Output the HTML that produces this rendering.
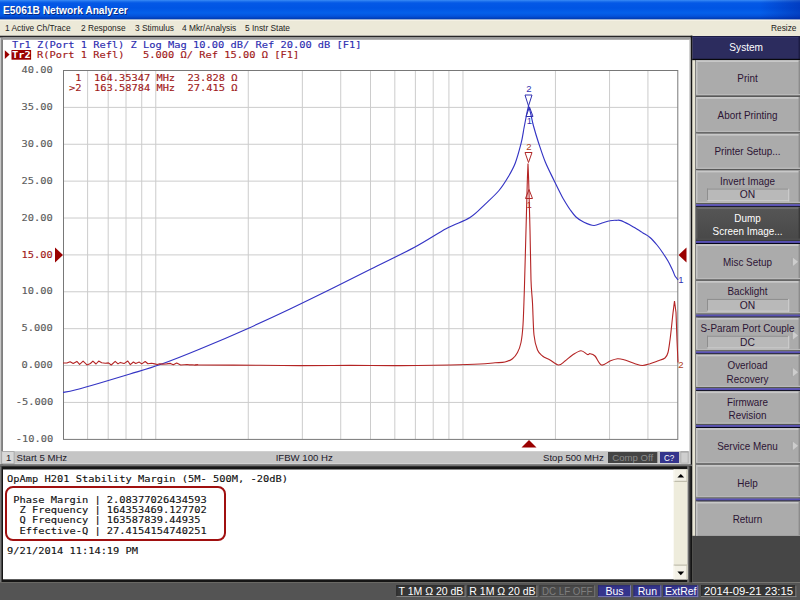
<!DOCTYPE html>
<html lang="en">
<head>
<meta charset="utf-8">
<title>E5061B Network Analyzer</title>
<style>
html,body{margin:0;padding:0;}
body{width:800px;height:600px;overflow:hidden;position:relative;background:#ece9d8;font-family:"Liberation Sans",sans-serif;}
div{position:absolute;box-sizing:border-box;white-space:nowrap;}
#plotsvg{position:absolute;left:0;top:0;}
.mono{font-family:"DejaVu Sans Mono","Liberation Mono",monospace;font-size:9.2px;white-space:pre;line-height:12px;transform:scaleX(1.1285);transform-origin:0 0;-webkit-text-stroke:0.13px currentColor;margin-top:0.6px;}
.ylab{color:#5c5c5c;right:747px;text-align:right;transform-origin:100% 0;}
#title{left:3px;top:3.6px;color:#fff;font-weight:bold;font-size:10.2px;line-height:14px;text-shadow:1px 1px 0 #0a2a80;}
.menu{top:20.5px;font-size:9.4px;line-height:14.5px;color:#222;transform-origin:0 0;transform:scaleX(0.89);}
.cb{top:451.2px;font-size:9.6px;line-height:13.6px;color:#201828;}
.cbx{top:452px;height:11px;font-size:9.6px;line-height:11.4px;text-align:center;}
#syshead{left:692.4px;top:37px;width:107.6px;color:#fff;text-align:center;font-size:10.1px;line-height:22.5px;}
.btn{left:696.8px;width:101px;height:36.8px;color:#2c1434;font-size:10.3px;text-align:center;}
.btn .lbl{left:0;width:100%;top:1.7px;height:100%;line-height:34.5px;transform:scaleX(0.96);}
.btn.two .lbl{line-height:13.8px;top:4.3px;}
.btn.val .lbl{line-height:14px;top:4.3px;height:14px;}
.btn.sel{color:#fff;}
.vbox{left:9.5px;top:18.8px;width:82.2px;height:12.7px;line-height:12.7px;font-size:10.3px;text-align:center;}
.sbx{top:586.2px;height:11px;font-size:10.5px;line-height:11px;text-align:center;color:#fff;}
.sbx span{display:inline-block;transform-origin:50% 50%;}
</style>
</head>
<body>
<svg id="plotsvg" width="800" height="600" viewBox="0 0 800 600">
<defs><linearGradient id="tg" x1="0" y1="0" x2="0" y2="1"><stop offset="0" stop-color="#3a8cf6"/><stop offset="0.076" stop-color="#1a6eec"/><stop offset="0.153" stop-color="#0458e6"/><stop offset="0.41" stop-color="#0055e4"/><stop offset="0.66" stop-color="#0560ea"/><stop offset="0.82" stop-color="#0453dc"/><stop offset="0.92" stop-color="#0142c0"/><stop offset="1" stop-color="#0138a8"/></linearGradient><linearGradient id="tr" x1="0" y1="0" x2="1" y2="0"><stop offset="0" stop-color="#001e96" stop-opacity="0"/><stop offset="1" stop-color="#001e96" stop-opacity="0.45"/></linearGradient><linearGradient id="rb" x1="0" y1="0" x2="1" y2="0"><stop offset="0" stop-color="#9a9a9a"/><stop offset="0.45" stop-color="#3a3a3a"/><stop offset="0.75" stop-color="#141414"/><stop offset="1" stop-color="#141414"/></linearGradient><linearGradient id="selg" x1="0" y1="0" x2="0" y2="1"><stop offset="0" stop-color="#565656"/><stop offset="1" stop-color="#464646"/></linearGradient></defs>
<rect x="0" y="0" width="800.00" height="600.00" fill="#ece9d8"/>
<rect x="0" y="0" width="800.00" height="19.60" fill="url(#tg)"/>
<rect x="760" y="0" width="40.00" height="19.60" fill="url(#tr)"/>
<rect x="0" y="19.6" width="800.00" height="1.00" fill="#faf7ea"/>
<rect x="0" y="35.7" width="692.40" height="429.30" fill="#ffffff"/>
<rect x="0" y="37.5" width="1.30" height="427.50" fill="#c8c8c8"/>
<rect x="1.3" y="37.5" width="1.50" height="427.50" fill="#606060"/>
<rect x="0" y="35.7" width="692.40" height="1.80" fill="#262626"/>
<rect x="1.3" y="37.5" width="689.40" height="2.30" fill="#9c9c9c"/>
<rect x="689" y="39.8" width="1.70" height="425.20" fill="#d2d2d2"/>
<rect x="690.7" y="35.7" width="1.70" height="429.30" fill="#141414"/>
<g stroke="#cccccc" stroke-width="1" fill="none">
<line x1="87.62" y1="70.5" x2="87.62" y2="439.3"/>
<line x1="108.19" y1="70.5" x2="108.19" y2="439.3"/>
<line x1="126.01" y1="70.5" x2="126.01" y2="439.3"/>
<line x1="141.72" y1="70.5" x2="141.72" y2="439.3"/>
<line x1="155.78" y1="70.5" x2="155.78" y2="439.3"/>
<line x1="248.25" y1="70.5" x2="248.25" y2="439.3"/>
<line x1="302.35" y1="70.5" x2="302.35" y2="439.3"/>
<line x1="340.73" y1="70.5" x2="340.73" y2="439.3"/>
<line x1="370.50" y1="70.5" x2="370.50" y2="439.3"/>
<line x1="394.82" y1="70.5" x2="394.82" y2="439.3"/>
<line x1="415.39" y1="70.5" x2="415.39" y2="439.3"/>
<line x1="433.21" y1="70.5" x2="433.21" y2="439.3"/>
<line x1="448.92" y1="70.5" x2="448.92" y2="439.3"/>
<line x1="462.98" y1="70.5" x2="462.98" y2="439.3"/>
<line x1="555.45" y1="70.5" x2="555.45" y2="439.3"/>
<line x1="609.55" y1="70.5" x2="609.55" y2="439.3"/>
<line x1="647.93" y1="70.5" x2="647.93" y2="439.3"/>
<line x1="63.3" y1="107.38" x2="677.7" y2="107.38"/>
<line x1="63.3" y1="144.26" x2="677.7" y2="144.26"/>
<line x1="63.3" y1="181.14" x2="677.7" y2="181.14"/>
<line x1="63.3" y1="218.02" x2="677.7" y2="218.02"/>
<line x1="63.3" y1="254.90" x2="677.7" y2="254.90"/>
<line x1="63.3" y1="291.78" x2="677.7" y2="291.78"/>
<line x1="63.3" y1="328.66" x2="677.7" y2="328.66"/>
<line x1="63.3" y1="365.54" x2="677.7" y2="365.54"/>
<line x1="63.3" y1="402.42" x2="677.7" y2="402.42"/>
</g>
<rect x="63.5" y="70.5" width="614.3" height="368.9" fill="none" stroke="#787878" stroke-width="1"/>
<path fill="none" stroke="#3434c4" stroke-width="1.15" stroke-linejoin="round" d="M63.0,392.5C65.0,392.1 68.8,391.6 75.0,390.0C81.2,388.4 90.8,385.7 100.0,383.0C109.2,380.3 119.8,377.1 130.0,374.0C140.2,370.9 149.3,368.5 161.0,364.3C172.7,360.1 185.5,355.0 200.0,349.0C214.5,343.0 233.0,335.1 248.0,328.4C263.0,321.7 276.3,315.5 290.0,309.0C303.7,302.5 316.5,296.3 330.0,289.6C343.5,282.9 356.8,276.1 371.0,269.0C385.2,261.9 402.4,253.8 415.0,247.0C427.6,240.2 437.3,233.4 446.5,228.5C455.7,223.6 463.6,221.5 470.0,217.5C476.4,213.5 480.2,208.8 485.0,204.3C489.8,199.8 495.1,195.1 499.0,190.5C502.9,185.9 505.6,181.4 508.3,176.8C511.0,172.2 513.2,168.5 515.3,163.0C517.4,157.5 519.5,149.5 521.0,143.7C522.5,137.9 523.1,132.8 524.0,128.0C524.9,123.2 525.8,118.7 526.5,115.0C527.2,111.3 528.2,107.5 528.5,106.0 M528.5,106.0C528.9,107.3 530.0,110.7 530.8,114.0C531.6,117.3 532.2,121.3 533.5,126.0C534.8,130.7 536.3,136.0 538.3,142.0C540.3,148.0 542.7,155.7 545.3,162.0C547.9,168.3 551.0,174.2 553.8,180.0C556.6,185.8 560.3,193.2 562.0,196.5C563.7,199.8 562.7,197.8 564.0,200.0C565.3,202.2 568.0,206.7 570.0,209.5C572.0,212.3 573.7,214.9 576.0,217.0C578.3,219.1 581.0,220.9 584.0,222.3C587.0,223.7 591.0,225.4 594.0,225.5C597.0,225.6 599.3,223.8 602.0,223.0C604.7,222.2 607.7,221.1 610.0,220.7C612.3,220.2 614.2,220.3 616.0,220.3C617.8,220.3 618.7,219.8 621.0,220.6C623.3,221.4 626.8,223.3 630.0,225.0C633.2,226.7 637.8,229.7 640.0,231.0C642.2,232.3 641.3,231.9 643.0,233.0C644.7,234.1 647.7,235.5 650.0,237.5C652.3,239.5 654.9,242.5 657.0,245.0C659.1,247.5 660.7,249.8 662.5,252.5C664.3,255.2 666.3,258.1 668.0,261.0C669.7,263.9 671.3,267.5 672.5,270.0C673.7,272.5 674.3,274.7 675.0,276.0C675.7,277.3 676.0,277.3 676.5,278.0C677.0,278.7 677.8,279.7 678.0,280.0"/>
<path fill="none" stroke="#b42424" stroke-width="1.1" stroke-linejoin="round" d="M63.0,363.0L66.9,363.0L70.1,361.7L73.2,363.5L76.9,361.4L79.6,364.4L83.1,361.2L87.0,364.9L90.4,363.5L92.9,361.1L96.0,364.0L98.7,361.1L101.7,362.8L105.4,363.2L108.5,362.9L111.2,365.0L115.2,361.4L118.0,363.9L120.3,362.4L124.0,363.6L127.8,361.0L130.3,364.6L133.4,362.0L135.7,363.5L139.3,362.1L141.7,363.9L145.2,361.5L147.9,363.7L151.5,363.3L154.7,363.9L157.3,364.5L159.7,363.8L162.7,364.1L166.6,363.9L170.4,363.4L173.3,364.8L176.7,363.1L180.7,365.0L184.2,364.7L187.0,364.5L189.3,364.9L192.0,364.8L195.0,365.1L198.1,364.9 M198.1,364.9C198.4,364.9 189.7,364.9 200.0,365.0C210.3,365.1 243.3,365.2 260.0,365.3C276.7,365.4 285.0,365.6 300.0,365.6C315.0,365.6 333.3,365.4 350.0,365.4C366.7,365.4 383.3,365.7 400.0,365.6C416.7,365.5 436.7,365.3 450.0,365.0C463.3,364.7 472.5,364.4 480.0,364.0C487.5,363.6 490.8,363.1 495.0,362.8C499.2,362.5 502.1,362.7 505.0,362.0C507.9,361.3 510.4,360.3 512.5,358.7C514.6,357.1 516.1,355.2 517.5,352.5C518.9,349.8 520.1,347.1 521.0,342.5C521.9,337.9 522.4,334.6 523.0,325.0C523.6,315.4 524.0,300.8 524.5,285.0C525.0,269.2 525.5,246.7 526.0,230.0C526.5,213.3 526.9,196.1 527.2,185.0C527.5,173.9 527.9,167.1 528.0,163.5 M528.0,163.5C528.1,167.1 528.5,173.9 528.8,185.0C529.1,196.1 529.6,214.2 530.0,230.0C530.4,245.8 530.6,267.8 531.0,280.0C531.4,292.2 532.0,293.8 532.5,303.0C533.0,312.2 533.2,327.2 534.0,335.0C534.8,342.8 536.1,346.5 537.5,350.0C538.9,353.5 540.4,354.3 542.5,356.0C544.6,357.7 547.3,358.5 550.0,360.0C552.7,361.5 556.0,364.8 558.5,365.0C561.0,365.2 562.7,362.7 565.0,361.0C567.3,359.3 569.8,356.7 572.5,355.0C575.2,353.3 578.5,350.8 581.0,350.7C583.5,350.6 586.0,354.0 587.5,354.5C589.0,355.0 588.8,353.4 590.0,353.7C591.2,353.9 593.1,354.1 595.0,356.0C596.9,357.9 599.0,364.2 601.5,365.0C604.0,365.8 607.3,362.1 610.0,361.0C612.7,359.9 615.0,358.9 617.5,358.7C620.0,358.5 622.1,359.2 625.0,360.0C627.9,360.8 632.1,362.8 635.0,363.7C637.9,364.6 640.0,365.5 642.5,365.5C645.0,365.5 647.5,364.4 650.0,363.7C652.5,362.9 655.0,361.9 657.5,361.0C660.0,360.1 663.2,359.4 665.0,358.0C666.8,356.6 667.2,355.5 668.0,352.5C668.8,349.5 669.2,345.8 670.0,340.0C670.8,334.2 671.8,324.0 672.5,317.5C673.2,311.0 674.2,303.8 674.5,301.0 M674.5,301.0L676.0,312.5L677.0,340.0L678.0,362.5"/>
<polygon points="55,247.5 55,262.5 63,255" fill="#9a0000"/>
<polygon points="686.5,247.5 686.5,262.5 678.5,255" fill="#9a0000"/>
<polygon points="521.5,447.5 536.5,447.5 529,440" fill="#9a0000"/>
<polygon points="4.8,50.2 4.8,59 9.6,54.6" fill="#9a0000"/>
<rect x="11.5" y="50" width="19.6" height="9.7" fill="#9a0000"/>
<g fill="none" stroke="#3030b0" stroke-width="1">
<polygon points="525,95 532,95 528.5,106"/>
<polygon points="526,116.5 533,116.5 529.5,107"/>
</g>
<g fill="none" stroke="#b02828" stroke-width="1">
<polygon points="525,152.5 532,152.5 528.5,162.5"/>
<polygon points="525.5,198.5 532.5,198.5 529,189.5"/>
</g>
<g font-family="Liberation Sans, sans-serif" font-size="9.5" text-anchor="middle">
<text x="528.8" y="92.2" fill="#3030b0">2</text>
<text x="529.5" y="124.4" fill="#3030b0">1</text>
<text x="528.8" y="150.4" fill="#b04020">2</text>
<text x="529.2" y="207.5" fill="#b02828">1</text>
<text x="681" y="282.5" fill="#3030b0">1</text>
<text x="681" y="367.6" fill="#b04020">2</text>
</g>
<rect x="1.3" y="451.2" width="687.70" height="12.60" fill="#c5c5c5"/>
<rect x="1.3" y="463.8" width="687.70" height="0.80" fill="#dadada"/>
<rect x="1.7" y="451.6" width="12.4" height="12.2" fill="#d8d8d8" stroke="#a2a2a2" stroke-width="0.8"/>
<rect x="608" y="452" width="49.30" height="11.00" fill="#444444"/>
<rect x="660" y="452" width="19.00" height="11.00" fill="#34348c"/>
<rect x="680.9" y="451.9" width="7.2" height="11.2" fill="#cfcfcf" stroke="#b0b0b0" stroke-width="0.8"/>
<rect x="680.5" y="451.5" width="8.00" height="0.80" fill="#9a9a9a"/>
<rect x="0" y="464.6" width="692.40" height="117.90" fill="#161616"/>
<rect x="0" y="464.6" width="692.40" height="1.70" fill="#707070"/>
<rect x="0" y="466.3" width="1.50" height="116.20" fill="#787878"/>
<rect x="687.4" y="466.3" width="5.00" height="116.20" fill="url(#rb)"/>
<rect x="3" y="469.5" width="684.40" height="109.80" fill="#ffffff"/>
<rect x="673.7" y="469.5" width="13.70" height="109.80" fill="#eeecdc"/>
<rect x="673.7" y="469.5" width="13.70" height="12.10" fill="#f3f1e6"/>
<rect x="673.7" y="480.8" width="13.70" height="1.00" fill="#b4b2a0"/>
<rect x="686.4" y="469.5" width="1.00" height="12.10" fill="#c8c6b4"/>
<rect x="673.7" y="469.5" width="0.80" height="12.10" fill="#fbfaf2"/>
<polygon points="677.4,477.6 684.2,477.6 680.8,474.0" fill="#000"/>
<rect x="673.7" y="564.6" width="13.70" height="14.70" fill="#f3f1e6"/>
<rect x="673.7" y="564.6" width="13.70" height="1.00" fill="#b4b2a0"/>
<rect x="686.4" y="564.6" width="1.00" height="14.70" fill="#c8c6b4"/>
<rect x="673.7" y="565.6" width="0.80" height="13.70" fill="#fbfaf2"/>
<polygon points="677.4,571.6 684.2,571.6 680.8,575.2" fill="#000"/>
<rect x="692.4" y="36" width="107.60" height="546.50" fill="#464646"/>
<rect x="692.4" y="36" width="107.60" height="24.00" fill="#2c2c5e"/>
<rect x="692.4" y="36" width="107.60" height="1.00" fill="#1c1c44"/>
<rect x="692.4" y="37" width="107.60" height="1.00" fill="#36366c"/>
<rect x="798.5" y="36" width="1.50" height="22.80" fill="#1c1c44"/>
<rect x="692.4" y="58.8" width="107.60" height="1.40" fill="#08080c"/>
<rect x="692.4" y="60.2" width="2.60" height="475.60" fill="#e8e5d4"/>
<rect x="695" y="60.2" width="1.00" height="475.60" fill="#808080"/>
<rect x="696" y="60.2" width="104.00" height="36.79" fill="#ababab"/>
<rect x="696" y="60.2" width="104.00" height="1.80" fill="#c8c8c8"/>
<rect x="696" y="60.2" width="1.50" height="36.79" fill="#c4c4c4"/>
<rect x="798.6" y="60.2" width="1.40" height="36.79" fill="#8c8c8c"/>
<rect x="696" y="94" width="104.00" height="1.40" fill="#bababa"/>
<rect x="696" y="95.4" width="104.00" height="1.59" fill="#585858"/>
<rect x="696" y="96.99" width="104.00" height="36.79" fill="#ababab"/>
<rect x="696" y="96.99" width="104.00" height="1.80" fill="#c8c8c8"/>
<rect x="696" y="96.99" width="1.50" height="36.79" fill="#c4c4c4"/>
<rect x="798.6" y="96.99" width="1.40" height="36.79" fill="#8c8c8c"/>
<rect x="696" y="130.79" width="104.00" height="1.40" fill="#bababa"/>
<rect x="696" y="132.19" width="104.00" height="1.59" fill="#585858"/>
<rect x="696" y="133.78" width="104.00" height="36.79" fill="#ababab"/>
<rect x="696" y="133.78" width="104.00" height="1.80" fill="#c8c8c8"/>
<rect x="696" y="133.78" width="1.50" height="36.79" fill="#c4c4c4"/>
<rect x="798.6" y="133.78" width="1.40" height="36.79" fill="#8c8c8c"/>
<rect x="696" y="167.58" width="104.00" height="1.40" fill="#bababa"/>
<rect x="696" y="168.98" width="104.00" height="1.59" fill="#585858"/>
<rect x="696" y="170.57" width="104.00" height="36.79" fill="#ababab"/>
<rect x="696" y="170.57" width="104.00" height="1.80" fill="#c8c8c8"/>
<rect x="696" y="170.57" width="1.50" height="36.79" fill="#c4c4c4"/>
<rect x="798.6" y="170.57" width="1.40" height="36.79" fill="#8c8c8c"/>
<rect x="696" y="201.77" width="104.00" height="1.40" fill="#b9b9b9"/>
<rect x="696" y="203.17" width="104.00" height="1.00" fill="#4a4c44"/>
<rect x="696" y="204.17" width="104.00" height="2.00" fill="#5850b4"/>
<rect x="696" y="206.17" width="104.00" height="1.19" fill="#06061a"/>
<rect x="707" y="188.57" width="82.20" height="12.70" fill="#b9b9b9"/>
<rect x="707" y="188.57" width="82.20" height="1.00" fill="#8e8e8e"/>
<rect x="707" y="188.57" width="1.00" height="12.70" fill="#8e8e8e"/>
<rect x="707" y="200.27" width="82.20" height="1.00" fill="#cfcfcf"/>
<rect x="788.2" y="188.57" width="1.00" height="12.70" fill="#cfcfcf"/>
<rect x="696" y="207.36" width="104.00" height="36.79" fill="url(#selg)"/>
<rect x="696" y="207.36" width="104.00" height="1.30" fill="#787878"/>
<rect x="696" y="207.36" width="1.50" height="36.79" fill="#5c5c5c"/>
<rect x="798.6" y="207.36" width="1.40" height="36.79" fill="#3a3a3a"/>
<rect x="696" y="238.56" width="104.00" height="1.40" fill="#505050"/>
<rect x="696" y="239.96" width="104.00" height="1.00" fill="#3a3c38"/>
<rect x="696" y="240.96" width="104.00" height="2.00" fill="#5850b4"/>
<rect x="696" y="242.96" width="104.00" height="1.19" fill="#06061a"/>
<rect x="696" y="244.15" width="104.00" height="36.79" fill="#ababab"/>
<rect x="696" y="244.15" width="104.00" height="1.80" fill="#c8c8c8"/>
<rect x="696" y="244.15" width="1.50" height="36.79" fill="#c4c4c4"/>
<rect x="798.6" y="244.15" width="1.40" height="36.79" fill="#8c8c8c"/>
<rect x="696" y="277.95" width="104.00" height="1.40" fill="#bababa"/>
<rect x="696" y="279.35" width="104.00" height="1.59" fill="#585858"/>
<polygon points="792.3,257.2 798,261.8 792.3,266.4" fill="#cdcdcd"/>
<line x1="792.3" y1="257.2" x2="792.3" y2="266.4" stroke="#9a9a9a" stroke-width="0.7"/>
<rect x="696" y="280.94" width="104.00" height="36.79" fill="#ababab"/>
<rect x="696" y="280.94" width="104.00" height="1.80" fill="#c8c8c8"/>
<rect x="696" y="280.94" width="1.50" height="36.79" fill="#c4c4c4"/>
<rect x="798.6" y="280.94" width="1.40" height="36.79" fill="#8c8c8c"/>
<rect x="696" y="312.14" width="104.00" height="1.40" fill="#b9b9b9"/>
<rect x="696" y="313.54" width="104.00" height="1.00" fill="#4a4c44"/>
<rect x="696" y="314.54" width="104.00" height="2.00" fill="#5850b4"/>
<rect x="696" y="316.54" width="104.00" height="1.19" fill="#06061a"/>
<rect x="707" y="298.94" width="82.20" height="12.70" fill="#b9b9b9"/>
<rect x="707" y="298.94" width="82.20" height="1.00" fill="#8e8e8e"/>
<rect x="707" y="298.94" width="1.00" height="12.70" fill="#8e8e8e"/>
<rect x="707" y="310.64" width="82.20" height="1.00" fill="#cfcfcf"/>
<rect x="788.2" y="298.94" width="1.00" height="12.70" fill="#cfcfcf"/>
<rect x="696" y="317.73" width="104.00" height="36.79" fill="#ababab"/>
<rect x="696" y="317.73" width="104.00" height="1.80" fill="#c8c8c8"/>
<rect x="696" y="317.73" width="1.50" height="36.79" fill="#c4c4c4"/>
<rect x="798.6" y="317.73" width="1.40" height="36.79" fill="#8c8c8c"/>
<rect x="696" y="348.93" width="104.00" height="1.40" fill="#b9b9b9"/>
<rect x="696" y="350.33" width="104.00" height="1.00" fill="#4a4c44"/>
<rect x="696" y="351.33" width="104.00" height="2.00" fill="#5850b4"/>
<rect x="696" y="353.33" width="104.00" height="1.19" fill="#06061a"/>
<rect x="707" y="335.73" width="82.20" height="12.70" fill="#b9b9b9"/>
<rect x="707" y="335.73" width="82.20" height="1.00" fill="#8e8e8e"/>
<rect x="707" y="335.73" width="1.00" height="12.70" fill="#8e8e8e"/>
<rect x="707" y="347.43" width="82.20" height="1.00" fill="#cfcfcf"/>
<rect x="788.2" y="335.73" width="1.00" height="12.70" fill="#cfcfcf"/>
<polygon points="792.3,330.8 798,335.4 792.3,340.0" fill="#cdcdcd"/>
<line x1="792.3" y1="330.8" x2="792.3" y2="340.0" stroke="#9a9a9a" stroke-width="0.7"/>
<rect x="696" y="354.52" width="104.00" height="36.79" fill="#ababab"/>
<rect x="696" y="354.52" width="104.00" height="1.80" fill="#c8c8c8"/>
<rect x="696" y="354.52" width="1.50" height="36.79" fill="#c4c4c4"/>
<rect x="798.6" y="354.52" width="1.40" height="36.79" fill="#8c8c8c"/>
<rect x="696" y="385.72" width="104.00" height="1.40" fill="#b9b9b9"/>
<rect x="696" y="387.12" width="104.00" height="1.00" fill="#4a4c44"/>
<rect x="696" y="388.12" width="104.00" height="2.00" fill="#5850b4"/>
<rect x="696" y="390.12" width="104.00" height="1.19" fill="#06061a"/>
<polygon points="792.3,367.6 798,372.2 792.3,376.8" fill="#cdcdcd"/>
<line x1="792.3" y1="367.6" x2="792.3" y2="376.8" stroke="#9a9a9a" stroke-width="0.7"/>
<rect x="696" y="391.31" width="104.00" height="36.79" fill="#ababab"/>
<rect x="696" y="391.31" width="104.00" height="1.80" fill="#c8c8c8"/>
<rect x="696" y="391.31" width="1.50" height="36.79" fill="#c4c4c4"/>
<rect x="798.6" y="391.31" width="1.40" height="36.79" fill="#8c8c8c"/>
<rect x="696" y="422.51" width="104.00" height="1.40" fill="#b9b9b9"/>
<rect x="696" y="423.91" width="104.00" height="1.00" fill="#4a4c44"/>
<rect x="696" y="424.91" width="104.00" height="2.00" fill="#5850b4"/>
<rect x="696" y="426.91" width="104.00" height="1.19" fill="#06061a"/>
<rect x="696" y="428.1" width="104.00" height="36.79" fill="#ababab"/>
<rect x="696" y="428.1" width="104.00" height="1.80" fill="#c8c8c8"/>
<rect x="696" y="428.1" width="1.50" height="36.79" fill="#c4c4c4"/>
<rect x="798.6" y="428.1" width="1.40" height="36.79" fill="#8c8c8c"/>
<rect x="696" y="461.9" width="104.00" height="1.40" fill="#bababa"/>
<rect x="696" y="463.3" width="104.00" height="1.59" fill="#585858"/>
<polygon points="792.3,441.2 798,445.8 792.3,450.4" fill="#cdcdcd"/>
<line x1="792.3" y1="441.2" x2="792.3" y2="450.4" stroke="#9a9a9a" stroke-width="0.7"/>
<rect x="696" y="464.89" width="104.00" height="36.79" fill="#ababab"/>
<rect x="696" y="464.89" width="104.00" height="1.80" fill="#c8c8c8"/>
<rect x="696" y="464.89" width="1.50" height="36.79" fill="#c4c4c4"/>
<rect x="798.6" y="464.89" width="1.40" height="36.79" fill="#8c8c8c"/>
<rect x="696" y="496.09" width="104.00" height="1.40" fill="#b9b9b9"/>
<rect x="696" y="497.49" width="104.00" height="1.00" fill="#4a4c44"/>
<rect x="696" y="498.49" width="104.00" height="2.00" fill="#5850b4"/>
<rect x="696" y="500.49" width="104.00" height="1.19" fill="#06061a"/>
<rect x="696" y="501.68" width="104.00" height="34.12" fill="#ababab"/>
<rect x="696" y="501.68" width="104.00" height="1.80" fill="#c8c8c8"/>
<rect x="696" y="501.68" width="1.50" height="34.12" fill="#c4c4c4"/>
<rect x="798.6" y="501.68" width="1.40" height="34.12" fill="#8c8c8c"/>
<rect x="696" y="535.48" width="104.00" height="0.32" fill="#bababa"/>
<rect x="0" y="582.5" width="800.00" height="17.50" fill="#545454"/>
<rect x="396.3" y="585.3" width="69.30" height="11.80" fill="#363636"/>
<rect x="396.3" y="585.3" width="69.30" height="1.00" fill="#2c2c2c"/>
<rect x="396.3" y="585.3" width="1.00" height="11.80" fill="#2c2c2c"/>
<rect x="396.3" y="596.1" width="69.30" height="1.00" fill="#8a8a8a"/>
<rect x="464.6" y="585.3" width="1.00" height="11.80" fill="#8a8a8a"/>
<rect x="467.5" y="585.3" width="69.90" height="11.80" fill="#363636"/>
<rect x="467.5" y="585.3" width="69.90" height="1.00" fill="#2c2c2c"/>
<rect x="467.5" y="585.3" width="1.00" height="11.80" fill="#2c2c2c"/>
<rect x="467.5" y="596.1" width="69.90" height="1.00" fill="#8a8a8a"/>
<rect x="536.4" y="585.3" width="1.00" height="11.80" fill="#8a8a8a"/>
<rect x="539.5" y="585.3" width="55.70" height="11.80" fill="#4a4a4a"/>
<rect x="539.5" y="585.3" width="55.70" height="1.00" fill="#3c3c3c"/>
<rect x="539.5" y="585.3" width="1.00" height="11.80" fill="#3c3c3c"/>
<rect x="539.5" y="596.1" width="55.70" height="1.00" fill="#747474"/>
<rect x="594.2" y="585.3" width="1.00" height="11.80" fill="#747474"/>
<rect x="598" y="585.3" width="33.00" height="11.80" fill="#34348c"/>
<rect x="598" y="585.3" width="33.00" height="1.00" fill="#2a2a70"/>
<rect x="598" y="585.3" width="1.00" height="11.80" fill="#2a2a70"/>
<rect x="598" y="596.1" width="33.00" height="1.00" fill="#7878b0"/>
<rect x="630" y="585.3" width="1.00" height="11.80" fill="#7878b0"/>
<rect x="633.5" y="585.3" width="27.80" height="11.80" fill="#34348c"/>
<rect x="633.5" y="585.3" width="27.80" height="1.00" fill="#2a2a70"/>
<rect x="633.5" y="585.3" width="1.00" height="11.80" fill="#2a2a70"/>
<rect x="633.5" y="596.1" width="27.80" height="1.00" fill="#7878b0"/>
<rect x="660.3" y="585.3" width="1.00" height="11.80" fill="#7878b0"/>
<rect x="663.3" y="585.3" width="34.90" height="11.80" fill="#34348c"/>
<rect x="663.3" y="585.3" width="34.90" height="1.00" fill="#2a2a70"/>
<rect x="663.3" y="585.3" width="1.00" height="11.80" fill="#2a2a70"/>
<rect x="663.3" y="596.1" width="34.90" height="1.00" fill="#7878b0"/>
<rect x="697.2" y="585.3" width="1.00" height="11.80" fill="#7878b0"/>
<rect x="701" y="585.3" width="95.40" height="11.80" fill="#363636"/>
<rect x="701" y="585.3" width="95.40" height="1.00" fill="#2c2c2c"/>
<rect x="701" y="585.3" width="1.00" height="11.80" fill="#2c2c2c"/>
<rect x="701" y="596.1" width="95.40" height="1.00" fill="#8a8a8a"/>
<rect x="795.4" y="585.3" width="1.00" height="11.80" fill="#8a8a8a"/>
</svg>

<div id="title">E5061B Network Analyzer</div>
<div class="menu" style="left:5px">1 Active Ch/Trace</div>
<div class="menu" style="left:81px">2 Response</div>
<div class="menu" style="left:134.5px">3 Stimulus</div>
<div class="menu" style="left:181.5px">4 Mkr/Analysis</div>
<div class="menu" style="left:244.5px">5 Instr State</div>
<div class="menu" style="left:770.5px">Resize</div>

<div class="mono" style="left:12px;top:38.9px;color:#2c2cb0;">Tr1 Z(Port 1 Refl) Z Log Mag 10.00 dB/ Ref 20.00 dB [F1]</div>
<div class="mono" style="left:12px;top:48px;color:#a01818;"><b style="color:#fff;-webkit-text-stroke:0">Tr2</b> R(Port 1 Refl)   5.000 Ω/ Ref 15.00 Ω [F1]</div>

<div class="mono ylab" style="top:63.8px">40.00</div>
<div class="mono ylab" style="top:100.6px">35.00</div>
<div class="mono ylab" style="top:137.5px">30.00</div>
<div class="mono ylab" style="top:174.3px">25.00</div>
<div class="mono ylab" style="top:211.2px">20.00</div>
<div class="mono ylab" style="top:248.0px;color:#a01818">15.00</div>
<div class="mono ylab" style="top:284.9px">10.00</div>
<div class="mono ylab" style="top:321.8px">5.000</div>
<div class="mono ylab" style="top:358.6px">0.000</div>
<div class="mono ylab" style="top:395.4px">-5.000</div>
<div class="mono ylab" style="top:432.3px">-10.00</div>

<div class="mono" style="left:69px;top:72.2px;color:#a01818;line-height:10.5px;"> 1  164.35347 MHz  23.828 Ω
&gt;2  163.58784 MHz  27.415 Ω</div>

<div class="cb" style="left:6px">1</div>
<div class="cb" style="left:16.5px">Start 5 MHz</div>
<div class="cb" style="left:275.7px">IFBW 100 Hz</div>
<div class="cb" style="left:543px">Stop 500 MHz</div>
<div class="cbx" style="left:608px;width:49.3px;color:#8c8c8c;">Comp Off</div>
<div class="cbx" style="left:660px;width:19px;color:#fff;"><span style="display:inline-block;transform:scaleX(0.84)">C?</span></div>

<div class="mono" style="left:6.5px;top:473.5px;color:#111;line-height:10.3px;">OpAmp H201 Stability Margin (5M- 500M, -20dB)

 Phase Margin | 2.08377026434593
  Z Frequency | 164353469.127702
  Q Frequency | 163587839.44935
  Effective-Q | 27.4154154740251

9/21/2014 11:14:19 PM</div>
<div style="left:5.4px;top:485.6px;width:221px;height:55.8px;border:2.4px solid #a01010;border-radius:8px;"></div>

<div id="syshead">System</div>
<div class="btn" style="top:60.20px"><div class="lbl">Print</div></div>
<div class="btn" style="top:96.99px"><div class="lbl">Abort Printing</div></div>
<div class="btn" style="top:133.78px"><div class="lbl">Printer Setup...</div></div>
<div class="btn val" style="top:170.57px"><div class="lbl">Invert Image</div><div class="vbox">ON</div></div>
<div class="btn sel two" style="top:207.36px"><div class="lbl">Dump<br>Screen Image...</div></div>
<div class="btn" style="top:244.15px"><div class="lbl">Misc Setup</div></div>
<div class="btn val" style="top:280.94px"><div class="lbl">Backlight</div><div class="vbox">ON</div></div>
<div class="btn val" style="top:317.73px"><div class="lbl">S-Param Port Couple</div><div class="vbox">DC</div></div>
<div class="btn two" style="top:354.52px"><div class="lbl">Overload<br>Recovery</div></div>
<div class="btn two" style="top:391.31px"><div class="lbl">Firmware<br>Revision</div></div>
<div class="btn" style="top:428.10px"><div class="lbl">Service Menu</div></div>
<div class="btn" style="top:464.89px"><div class="lbl">Help</div></div>
<div class="btn" style="top:501.68px"><div class="lbl">Return</div></div>

<div class="sbx" style="left:396.3px;width:69.3px;">T 1M Ω 20 dB</div>
<div class="sbx" style="left:467.5px;width:69.9px;">R 1M Ω 20 dB</div>
<div class="sbx" style="left:539.5px;width:55.7px;color:#7e7e7e;"><span style="transform:scaleX(0.93)">DC LF OFF</span></div>
<div class="sbx" style="left:598px;width:33px;">Bus</div>
<div class="sbx" style="left:633.5px;width:27.8px;">Run</div>
<div class="sbx" style="left:663.3px;width:34.9px;">ExtRef</div>
<div class="sbx" style="left:701px;width:95.4px;"><span style="transform:scaleX(1.075)">2014-09-21 23:15</span></div>
</body>
</html>
